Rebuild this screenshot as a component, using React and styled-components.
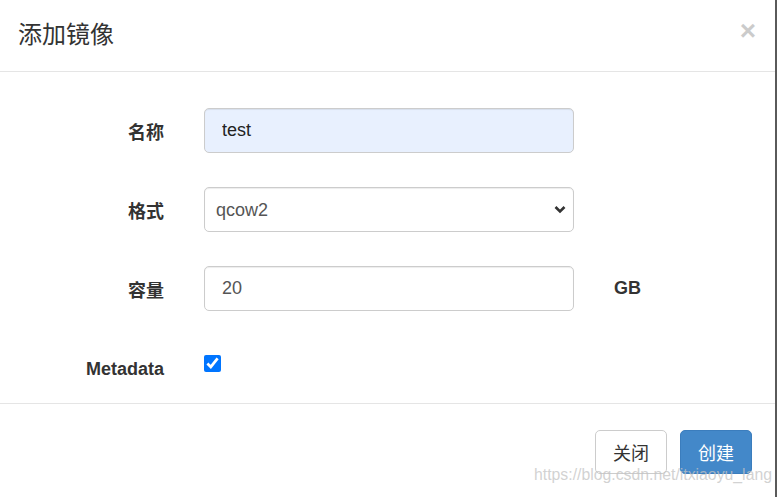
import React from "react";
import styled, { createGlobalStyle } from "styled-components";

const GlobalStyle = createGlobalStyle`
  html, body {
    margin: 0;
    padding: 0;
    background: #fff;
  }
  body {
    font-family: "Liberation Sans", Arial, "Noto Sans CJK SC", sans-serif;
    color: #333;
  }
`;

const Modal = styled.div`
  position: relative;
  width: 777px;
  height: 497px;
  box-sizing: border-box;
  border-right: 2px solid #5a5a5a;
  background: #fff;
  display: flex;
  flex-direction: column;
`;

const Header = styled.div`
  height: 72px;
  box-sizing: border-box;
  border-bottom: 1px solid #e5e5e5;
  display: flex;
  align-items: center;
  justify-content: space-between;
  padding: 0 19px 6px 18px;
`;

const Title = styled.h4`
  margin: 0;
  font-family: "Noto Sans CJK SC", sans-serif;
  font-weight: 400;
  font-size: 24px;
  color: #333;
`;

const Close = styled.span`
  font-size: 28px;
  font-weight: 700;
  color: #000;
  opacity: 0.2;
  line-height: 1;
  margin-bottom: 4px;
`;

const Body = styled.div`
  padding: 36px 0 13px 0;
  border-bottom: 1px solid #e5e5e5;
  display: grid;
  grid-template-columns: 164px 370px auto;
  column-gap: 40px;
  row-gap: 34px;
`;

const Label = styled.label`
  font-family: "Liberation Sans", Arial, "Noto Sans CJK SC", sans-serif;
  font-weight: 700;
  font-size: 18px;
  color: #333;
  text-align: right;
  align-self: ${(p) => (p.$low ? "start" : "center")};
  padding-top: ${(p) => (p.$low ? "14px" : "0")};
`;

const Input = styled.input`
  height: 45px;
  box-sizing: border-box;
  border: 1px solid #ccc;
  border-radius: 5px;
  padding: 0 17px;
  font-family: "Liberation Sans", Arial, sans-serif;
  font-size: 18px;
  color: ${(p) => (p.$filled ? "#222" : "#555")};
  background: ${(p) => (p.$filled ? "#e8f0fe" : "#fff")};
  box-shadow: inset 0 1px 1px rgba(0, 0, 0, 0.075);
  outline: none;
`;

const SelectWrap = styled.div`
  position: relative;
  height: 45px;
`;

const Select = styled.select`
  appearance: none;
  width: 100%;
  height: 45px;
  box-sizing: border-box;
  border: 1px solid #ccc;
  border-radius: 5px;
  padding: 0 11px;
  font-family: "Liberation Sans", Arial, sans-serif;
  font-size: 18px;
  color: #555;
  background: #fff;
  box-shadow: inset 0 1px 1px rgba(0, 0, 0, 0.075);
  outline: none;
`;

const Chevron = styled.svg`
  position: absolute;
  right: 8px;
  top: 18px;
  pointer-events: none;
`;

const Unit = styled.span`
  font-weight: 700;
  font-size: 18px;
  align-self: center;
  color: #333;
`;

const CheckCell = styled.div`
  height: 45px;
  padding-top: 10px;
  box-sizing: border-box;
`;

const Check = styled.input`
  width: 17px;
  height: 17px;
  margin: 0;
  accent-color: #0075ff;
`;

const Footer = styled.div`
  position: relative;
  flex: 1;
  display: flex;
  justify-content: flex-end;
  align-items: flex-start;
  gap: 13px;
  padding: 26px 23px 0 0;
`;

const Button = styled.button`
  width: 72px;
  height: 44px;
  box-sizing: border-box;
  border-radius: 5px;
  font-family: "Noto Sans CJK SC", sans-serif;
  font-size: 18px;
  border: 1px solid ${(p) => (p.$primary ? "#3b7dbd" : "#ccc")};
  background: ${(p) => (p.$primary ? "#4388c9" : "#fff")};
  color: ${(p) => (p.$primary ? "#fff" : "#333")};
  padding: 0;
`;

const Watermark = styled.span`
  position: absolute;
  left: 534px;
  top: 62px;
  font-family: "Liberation Sans", Arial, sans-serif;
  font-size: 15.8px;
  color: rgba(195, 195, 195, 0.75);
  white-space: nowrap;
  pointer-events: none;
`;

export default function App() {
  return (
    <>
      <GlobalStyle />
      <Modal>
        <Header>
          <Title>添加镜像</Title>
          <Close>×</Close>
        </Header>
        <Body>
          <Label>名称</Label>
          <Input $filled defaultValue="test" />
          <span />

          <Label>格式</Label>
          <SelectWrap>
            <Select defaultValue="qcow2">
              <option value="qcow2">qcow2</option>
              <option value="raw">raw</option>
            </Select>
            <Chevron width="12" height="9" viewBox="0 0 12 9">
              <path d="M1.5 2 L6 6.5 L10.5 2" fill="none" stroke="#333" strokeWidth="2.6" />
            </Chevron>
          </SelectWrap>
          <span />

          <Label>容量</Label>
          <Input defaultValue="20" />
          <Unit>GB</Unit>

          <Label $low>Metadata</Label>
          <CheckCell>
            <Check type="checkbox" defaultChecked />
          </CheckCell>
          <span />
        </Body>
        <Footer>
          <Button>关闭</Button>
          <Button $primary>创建</Button>
          <Watermark>https://blog.csdn.net/itxiaoyu_lang</Watermark>
        </Footer>
      </Modal>
    </>
  );
}
